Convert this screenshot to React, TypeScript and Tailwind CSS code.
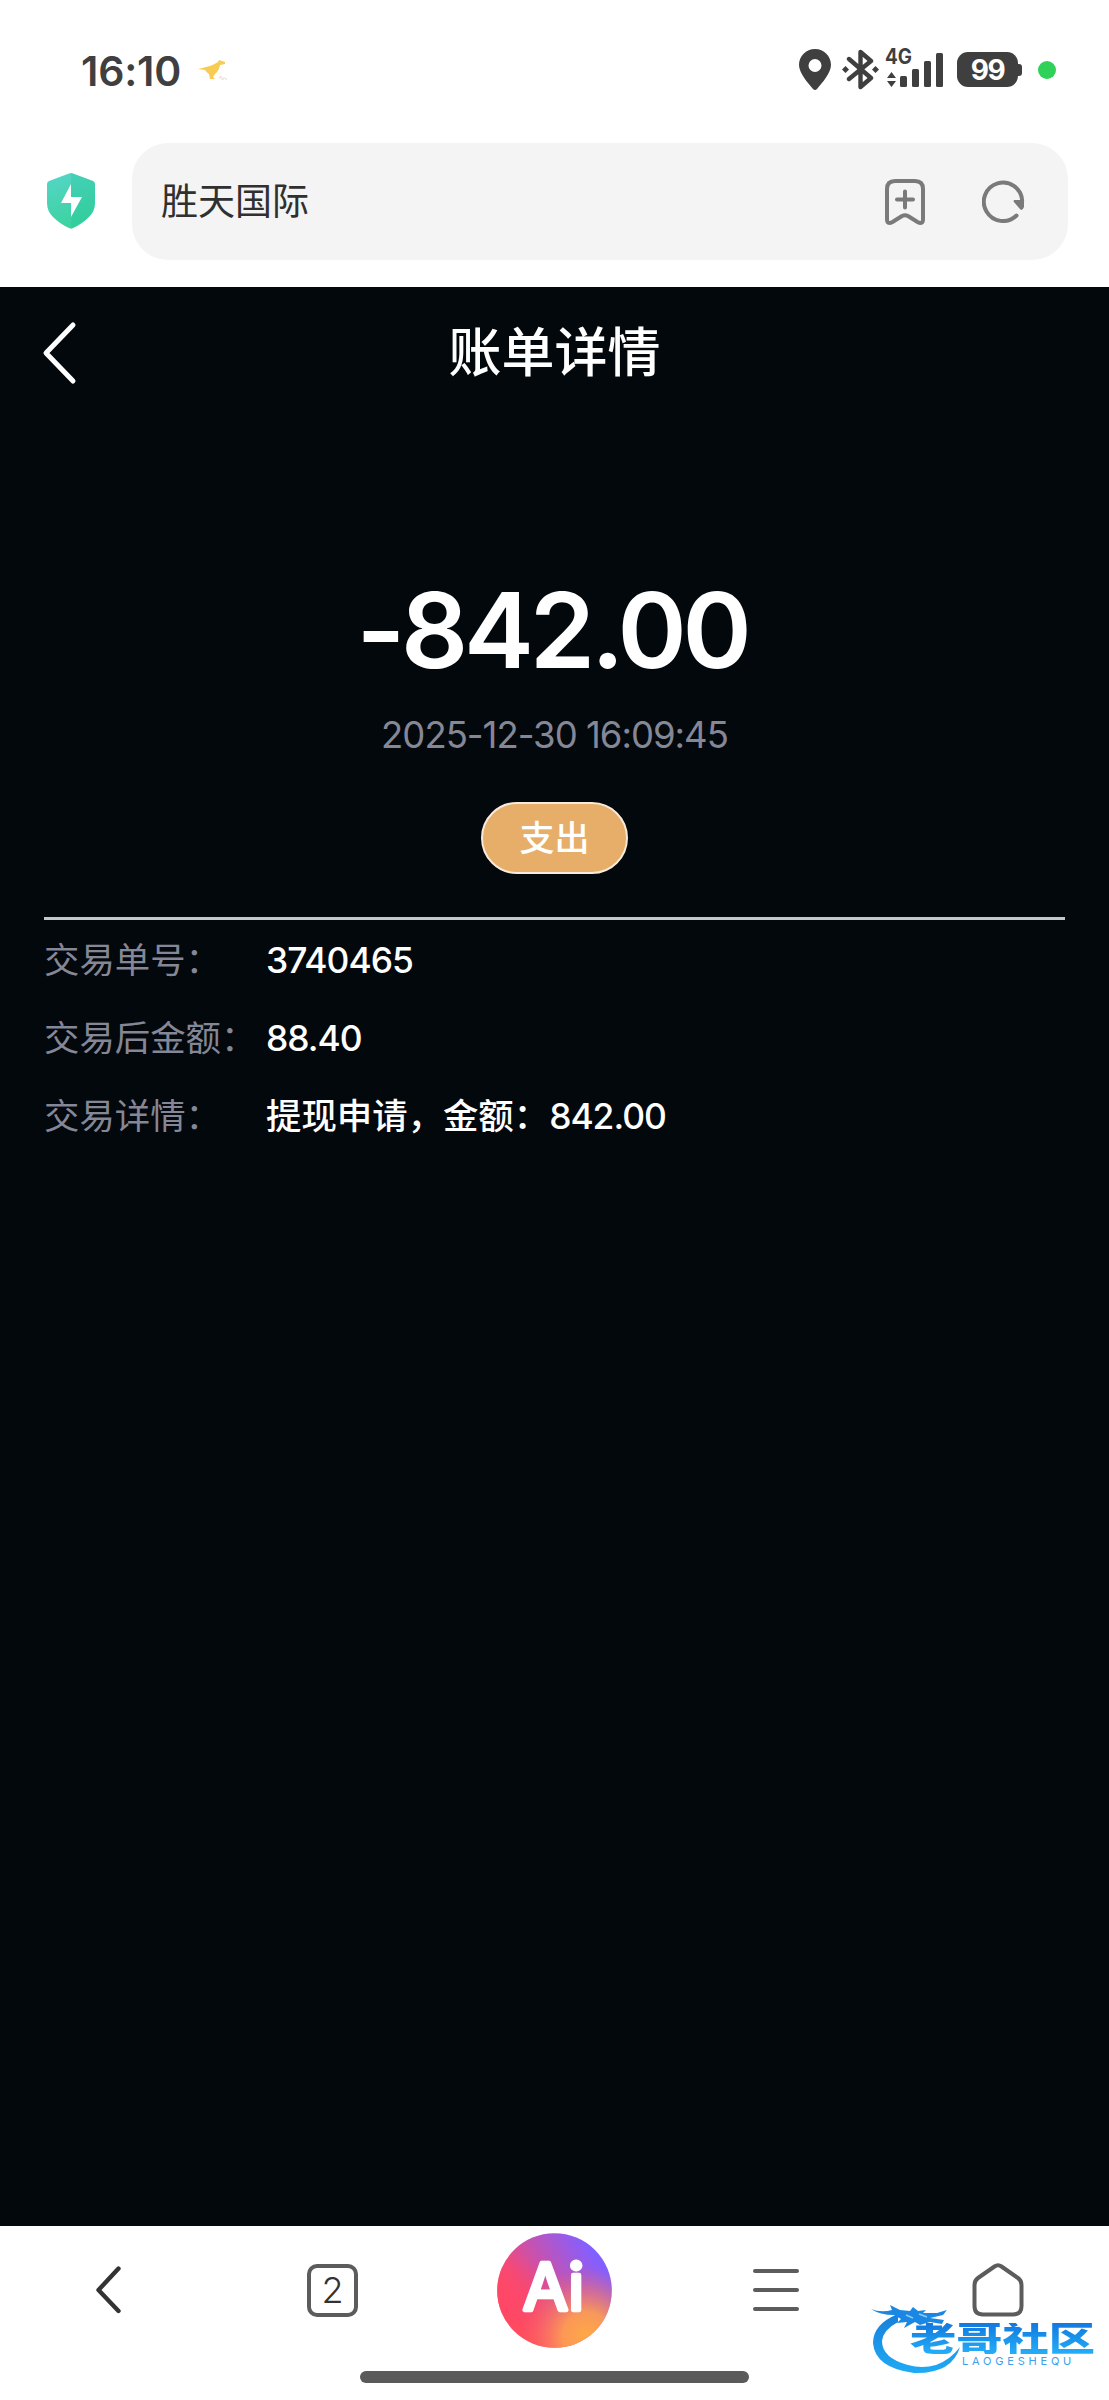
const details = [
    { label: '交易单号：', text: '', number: '3740465' },
    { label: '交易后金额：', text: '', number: '88.40' },
    { label: '交易详情：', text: '提现申请，金额：', number: '842.00' },
];

function StatusBar() {
    return (
        <div className="flex h-[143px] items-start text-[#3f3f3f]">
            <div className="ml-[81px] mt-[46px] h-[50px] w-[103px] whitespace-nowrap text-[41px] font-semibold leading-[50px] tracking-[-0.2px]">16:10</div>
            {/* Notificación */}
            <svg className="ml-[14px] mt-[59px]" width="30" height="22" viewBox="0 0 30 22">
                <path d="M0 10 L12 7 Q17 5 20 3 L21 1 L27 3 L27 5 L22 6 Q21 12 17 15 L15 18 L17 20 L12 20 L11 15 Q8 13 7 11 Z" fill="#f8cb52" />
                <path d="M21 19 l2 -2 v3 h3 v-2 m1 2 h2" fill="none" stroke="#e6dccb" />
            </svg>
            <svg className="ml-[571px] mt-[49px]" width="32" height="41" viewBox="0 0 32 41">
                <path fillRule="evenodd" d="M16 0 C25 0 32 7 32 16 C32 24 23 34 18 40 Q16 42 14 40 C9 34 0 24 0 16 C0 7 7 0 16 0 Z M16 10 a6.5 6.5 0 1 0 0 13 a6.5 6.5 0 1 0 0 -13 Z" fill="#3f3f3f" />
            </svg>
            <svg className="ml-[11px] mt-[49px]" width="37" height="41" viewBox="0 0 37 41">
                <path d="M7 10 L29 29 L18.500 38 V3 L29 12 L7 30" fill="none" stroke="#3f3f3f" strokeWidth="4.400" strokeLinecap="round" strokeLinejoin="round" />
                <path d="M3.500 17 L7 20.500 L3.500 24 L0 20.500 Z M33.500 17 L37 20.500 L33.500 24 L30 20.500 Z" fill="#3f3f3f" />
            </svg>
            <svg className="ml-[6px] mt-[38px]" width="60" height="50" viewBox="0 -8 60 50" fill="#3f3f3f">
                <text x="0" y="18" fontSize="21" fontWeight="700" textLength="27" lengthAdjust="spacingAndGlyphs">4G</text>
                <path d="M6.500 26 L11 32 H2 Z M2 35 H11 L6.500 41 Z" />
                <rect x="15" y="30" width="7" height="11" rx="1.500" />
                <rect x="27" y="23" width="7" height="18" rx="1.500" />
                <rect x="39" y="15" width="7" height="26" rx="1.500" />
                <rect x="51" y="7" width="7" height="34" rx="1.500" />
            </svg>
            <div className="ml-[12px] mt-[52px] flex h-[35px] items-center">
                <div className="flex h-[35px] w-[61px] items-center justify-center rounded-[11px] bg-[#3f3f3f] text-[28px] font-bold leading-none tracking-[-1.5px] text-white">99</div>
                <div className="h-[12px] w-[4px] rounded-r-[3px] bg-[#3f3f3f]" />
            </div>
            <div className="ml-[16px] mt-[61px] size-[18px] rounded-full bg-[#30d158]" />
        </div>
    );
}

function AddressBar() {
    return (
        <div className="flex h-[144px] items-start">
            <svg className="ml-[47px] mt-[30px]" width="48" height="56" viewBox="0 0 48 56">
                <defs>
                    <linearGradient id="shield" x1="0" y1="0" x2="0.3" y2="1">
                        <stop offset="0" stopColor="#56d5c8" />
                        <stop offset="1" stopColor="#3bd3a0" />
                    </linearGradient>
                </defs>
                <path d="M22 .500 Q24 -.300 26 .500 L46 8 Q48 9 48 11 V30 Q48 38 42 44 Q35 51 26 55 Q24 56 22 55 Q13 51 6 44 Q0 38 0 30 V11 Q0 9 2 8 Z" fill="url(#shield)" />
                <path d="M24 0 Q25 0 26 .500 L46 8 Q48 9 48 11 V30 Q48 38 42 44 Q35 51 26 55 L24 56 Z" fill="#12bc92" opacity=".2" />
                <path d="M24 11 L14 30 H24 V44 L35 24 H24 Z" fill="#fff" />
            </svg>
            <div className="ml-[37px] flex h-[117px] w-[936px] items-center rounded-[36px] bg-[#f4f4f4]">
                <span className="ml-[29px] flex-1 text-[37px] leading-none text-[#303030]">胜天国际</span>
                <svg width="40" height="46" viewBox="0 0 40 46" fill="none" stroke="#7a7a7a" strokeWidth="4" strokeLinecap="round" strokeLinejoin="round">
                    <path d="M10 2 H30 Q38 2 38 10 V40 Q38 46 32.500 43 L23 37 Q20 35.500 17 37 L7.500 43 Q2 46 2 40 V10 Q2 2 10 2 Z" />
                    <path d="M12 20.500 H28 M20 12.500 V28.500" />
                </svg>
                <svg className="ml-[57px] mr-[43px]" width="43" height="43" viewBox="0 0 43 43">
                    <path d="M34.500 35.500 A19.200 19.200 0 1 1 40.200 21" fill="none" stroke="#7a7a7a" strokeWidth="4" strokeLinecap="round" />
                    <path d="M32 20 H42 V27 Q40 32 37.500 28.500 L31.500 21.500 Z" fill="#7a7a7a" />
                </svg>
            </div>
        </div>
    );
}

function BillDetail() {
    return (
        <main className="flex h-[1939px] flex-col bg-[#03080c]">
            <header className="flex h-[132px] items-center">
                <div className="flex-1">
                    <svg className="ml-[42px]" width="35" height="64" viewBox="0 0 35 64">
                        <path d="M31 4 L4 32 L31 60" fill="none" stroke="#fff" strokeWidth="5" strokeLinecap="round" strokeLinejoin="round" />
                    </svg>
                </div>
                <h1 className="text-[53px] font-medium leading-none text-white">账单详情</h1>
                <div className="flex-1" />
            </header>
            <section className="mx-[44px] flex h-[501px] flex-col items-center border-b-[3px] border-[#c3c9ca]">
                <div className="mr-[5px] mt-[151px] whitespace-nowrap text-[105px] font-semibold leading-[120px] tracking-[-4.2px] text-white">-842.00</div>
                <div className="mt-[20px] whitespace-nowrap text-[36.5px] leading-[50px] tracking-[-1px] text-[#858796]">2025-12-30 16:09:45</div>
                <div className="mt-[42px] flex h-[72px] w-[147px] items-center justify-center rounded-full border-[2.5px] border-[#f8eadb] bg-[#e7ae69] text-[35px] font-medium leading-none text-white">支出</div>
            </section>
            <section className="ml-[44px] pt-[2px]">
                {details.map(item => (
                    <div key={item.label} className="flex h-[78px] items-center whitespace-nowrap text-[35.4px] leading-none">
                        <span className="w-[222px] text-[#858796]">{item.label}</span>
                        <span className="font-medium text-white">
                            {item.text}
                            <span className="tracking-[-1px]">{item.number}</span>
                        </span>
                    </div>
                ))}
            </section>
        </main>
    );
}

function Watermark() {
    return (
        <div className="absolute left-[870px] top-[75px] h-[74px] w-[226px]">
            <svg className="absolute left-0 top-0" width="96" height="74" viewBox="0 0 96 74">
                <defs>
                    <linearGradient id="dragon" x1="0" y1="0" x2="0" y2="1">
                        <stop offset="0" stopColor="#1680dc" />
                        <stop offset="1" stopColor="#20aaf5" />
                    </linearGradient>
                </defs>
                <path d="M28 13 Q3 23 3 42 Q5 67 44 72 Q82 73 90 46 Q80 59 66 64 Q52 68 38 64 Q12 57 12 40 Q13 29 28 21 Z" fill="url(#dragon)" />
                <path d="M24 14 Q10 14 1 8 Q11 12 22 9 L20 4 L30 9 L40 10 L43 6 L48 10 L56 9 L53 12 L67 12 L77 9 L73 14 L60 17 L74 19 L72 23 L60 21 L50 24 L45 21 L34 27 L37 21 L27 22 L31 18 Z" fill="#1a88e2" />
                <path d="M36 14 L43 17 M49 13 L57 16" stroke="#8bc9f6" strokeWidth="1.500" />
            </svg>
            <div className="absolute left-[40px] top-[22px] h-[31px] origin-top-left scale-x-[1.36] whitespace-nowrap bg-gradient-to-b from-[#1378df] to-[#25aef8] bg-clip-text text-[34px] font-black leading-[31px] text-transparent">老哥社区</div>
            <div className="absolute left-[92px] top-[55px] whitespace-nowrap text-[11px] leading-[11px] tracking-[3.8px] text-[#3aa0e8]">LAOGESHEQU</div>
        </div>
    );
}

function BottomBar() {
    return (
        <footer className="relative h-[174px] bg-white">
            <nav className="flex h-[128px] items-center">
                <svg className="ml-[94px]" width="30" height="50" viewBox="0 0 30 50">
                    <path d="M24.500 3.500 L4.500 25 L24.500 46" fill="none" stroke="#333" strokeWidth="4.400" strokeLinecap="round" strokeLinejoin="round" />
                </svg>
                <div className="ml-[183px] flex h-[53px] w-[51px] items-center justify-center rounded-[10px] border-[4px] border-[#5c5c5c] text-[36px] font-light leading-none text-[#333]">2</div>
                <svg className="ml-[139px]" width="115" height="115" viewBox="0 0 115 115">
                    <defs>
                        <linearGradient id="aiBase" x1="0.1" y1="0.7" x2="0.85" y2="0.2">
                            <stop offset="0" stopColor="#ff4d5a" />
                            <stop offset="0.25" stopColor="#f04a7c" />
                            <stop offset="1" stopColor="#845fff" />
                        </linearGradient>
                        <radialGradient id="aiWarm" cx="0.78" cy="0.9" r="0.6">
                            <stop offset="0" stopColor="#ffa846" />
                            <stop offset="0.35" stopColor="#ffa04f" stopOpacity="0.9" />
                            <stop offset="1" stopColor="#ff6060" stopOpacity="0" />
                        </radialGradient>
                        <radialGradient id="aiPink" cx="0.05" cy="0.6" r="0.45">
                            <stop offset="0" stopColor="#ff4668" />
                            <stop offset="1" stopColor="#ff4668" stopOpacity="0" />
                        </radialGradient>
                    </defs>
                    <circle cx="57.500" cy="57.500" r="57.300" fill="url(#aiBase)" />
                    <circle cx="57.500" cy="57.500" r="57.300" fill="url(#aiPink)" />
                    <circle cx="57.500" cy="57.500" r="57.300" fill="url(#aiWarm)" />
                    <text x="26" y="77" fontSize="64" fontWeight="400" fill="#fff" stroke="#fff" strokeWidth="4.500" strokeLinejoin="round" textLength="61" lengthAdjust="spacingAndGlyphs">Ai</text>
                </svg>
                <div className="ml-[141px] flex w-[46px] flex-col gap-[15px]">
                    <div className="h-[4px] rounded-full bg-[#5c5c5c]" />
                    <div className="h-[4px] rounded-full bg-[#5c5c5c]" />
                    <div className="h-[4px] rounded-full bg-[#5c5c5c]" />
                </div>
                <svg className="ml-[173px]" width="52" height="54" viewBox="0 0 52 54">
                    <path d="M22.500 3.500 Q26 1 29.500 3.500 L46 15 Q49.500 17.500 49.500 22 V43 Q49.500 51.500 41 51.500 H11 Q2.500 51.500 2.500 43 V22 Q2.500 17.500 6 15 Z" fill="none" stroke="#5c5c5c" strokeWidth="4" strokeLinejoin="round" />
                </svg>
            </nav>
            <div className="ml-[360px] mt-[17px] h-[12px] w-[389px] rounded-full bg-[#5a5a5a]" />
            <Watermark />
        </footer>
    );
}

export default function App() {
    return (
        <div className="h-[2400px] w-[1109px] overflow-hidden bg-white font-['Inter','Noto_Sans_CJK_SC',sans-serif]">
            <StatusBar />
            <AddressBar />
            <BillDetail />
            <BottomBar />
        </div>
    );
}
